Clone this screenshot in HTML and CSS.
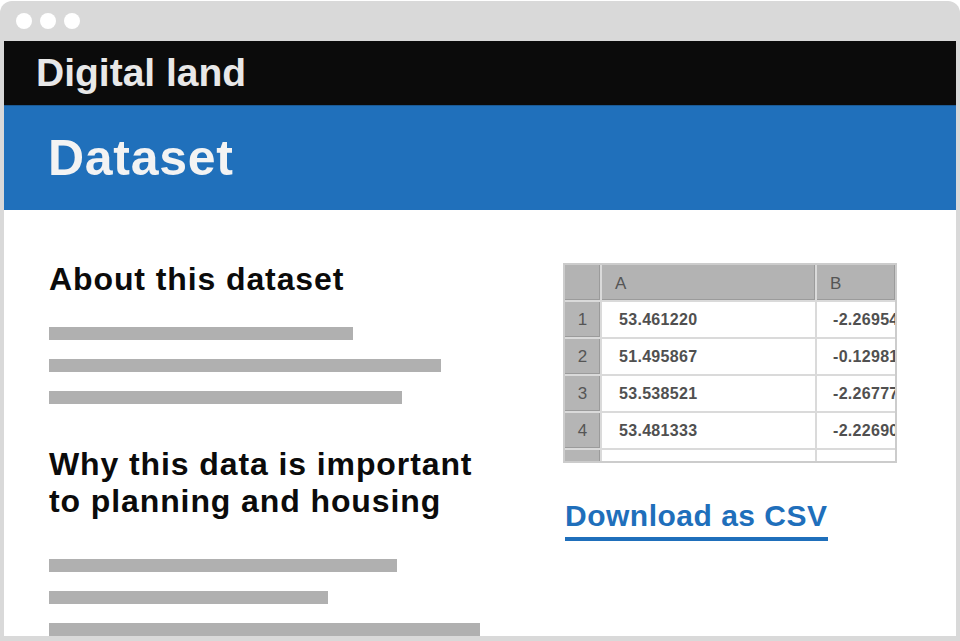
FILE: index.html
```html
<!DOCTYPE html>
<html lang="en">
<head>
<meta charset="utf-8">
<title>Digital land – Dataset</title>
<link rel="stylesheet" href="styles.css">
</head>
<body>
<div class="frame">
  <div class="chrome">
    <span class="dot"></span><span class="dot"></span><span class="dot"></span>
  </div>
  <div class="page">
    <header class="site-header">Digital land</header>
    <div class="banner"><h1 class="banner-title">Dataset</h1></div>
    <main class="content">
      <section class="left">
        <h2 class="heading">About this dataset</h2>
        <div class="bars">
          <span class="bar" style="width:304px"></span>
          <span class="bar" style="width:392px"></span>
          <span class="bar" style="width:353px"></span>
        </div>
        <h2 class="heading heading-second">Why this data is important to planning and housing</h2>
        <div class="bars">
          <span class="bar" style="width:348px"></span>
          <span class="bar" style="width:279px"></span>
          <span class="bar" style="width:431px"></span>
        </div>
      </section>
      <section class="right">
        <div class="sheet">
          <div class="cell corner"></div>
          <div class="cell colhead">A</div>
          <div class="cell colhead">B</div>

          <div class="cell rownum">1</div>
          <div class="cell val">53.461220</div>
          <div class="cell val valb">-2.269540</div>

          <div class="cell rownum">2</div>
          <div class="cell val">51.495867</div>
          <div class="cell val valb">-0.129810</div>

          <div class="cell rownum">3</div>
          <div class="cell val">53.538521</div>
          <div class="cell val valb">-2.267770</div>

          <div class="cell rownum">4</div>
          <div class="cell val">53.481333</div>
          <div class="cell val valb">-2.226900</div>

          <div class="cell rownum"></div>
          <div class="cell val"></div>
          <div class="cell val"></div>
        </div>
        <a class="download" href="#">Download as CSV</a>
      </section>
    </main>
  </div>
</div>
</body>
</html>
```
FILE: styles.css
```css
html, body {
  margin: 0;
  padding: 0;
  background: #ffffff;
}

body {
  width: 960px;
  height: 641px;
  overflow: hidden;
  font-family: "Liberation Sans", Arial, Helvetica, sans-serif;
}

.frame {
  box-sizing: border-box;
  width: 960px;
  height: 640px;
  margin-top: 1px;
  background: #d9d9d9;
  border-radius: 12px 12px 0 0;
  padding: 0 4px 5px 4px;
  display: flex;
  flex-direction: column;
}

.chrome {
  height: 40px;
  display: flex;
  align-items: center;
  gap: 8px;
  padding-left: 12px;
  box-sizing: border-box;
}

.dot {
  width: 16px;
  height: 16px;
  border-radius: 50%;
  background: #ffffff;
}

.page {
  flex: 1;
  background: #ffffff;
  display: flex;
  flex-direction: column;
  overflow: hidden;
}

.site-header {
  height: 64px;
  background: #0b0b0b;
  color: #e8e8e8;
  font-weight: 700;
  font-size: 39px;
  line-height: 64px;
  padding-left: 32px;
}

.banner {
  height: 105px;
  box-sizing: border-box;
  background: #2070bb;
  border-top: 1px solid #1b5a94;
  padding: 24px 0 0 44px;
}

.banner-title {
  margin: 0;
  color: #f3f3f3;
  font-size: 50px;
  line-height: 56px;
  font-weight: 700;
  letter-spacing: 0.7px;
}

.content {
  flex: 1;
  display: grid;
  grid-template-columns: 440px 334px;
  column-gap: 74px;
  padding: 51px 0 0 45px;
  overflow: hidden;
}

.heading {
  margin: 0;
  color: #0b0b0b;
  font-size: 32px;
  line-height: 37px;
  font-weight: 700;
  letter-spacing: 0.9px;
}

.heading-second {
  margin-top: 42px;
}

.bars {
  display: flex;
  flex-direction: column;
  gap: 19px;
  margin-top: 29px;
}

.heading-second + .bars {
  margin-top: 39px;
}

.bar {
  display: block;
  height: 13px;
  background: #b0b0b0;
}

.right {
  display: flex;
  flex-direction: column;
  align-items: flex-start;
}

.sheet {
  margin-top: 2px;
  width: 334px;
  height: 200px;
  box-sizing: border-box;
  border: 2px solid #cccccc;
  background: #dadada;
  display: grid;
  grid-template-columns: 35px 213px 1fr;
  grid-auto-rows: 35px;
  gap: 2px;
  overflow: hidden;
  font-size: 16px;
  color: #4a4a4a;
}

.cell {
  display: flex;
  align-items: center;
  background: #ffffff;
  white-space: nowrap;
  overflow: hidden;
}

.corner,
.colhead {
  background: #b3b3b3;
  box-shadow: inset -1px -1px 0 #9b9b9b;
}

.colhead {
  padding-left: 13px;
  font-size: 17px;
  color: #555555;
  padding-top: 2px;
}

.rownum {
  background: #b5b5b5;
  box-shadow: inset -1px -1px 0 #9b9b9b;
  justify-content: center;
  font-size: 17px;
  color: #555555;
}

.val {
  padding-left: 17px;
  font-weight: 700;
  letter-spacing: 0.3px;
  color: #505050;
}

.valb {
  padding-left: 16px;
}

.download {
  margin-top: 35px;
  margin-left: 2px;
  display: inline-block;
  color: #1f6fbb;
  font-size: 30px;
  line-height: 36px;
  font-weight: 700;
  letter-spacing: 0.5px;
  text-decoration: none;
  padding-bottom: 3px;
  border-bottom: 4px solid #1f6fbb;
}
```
